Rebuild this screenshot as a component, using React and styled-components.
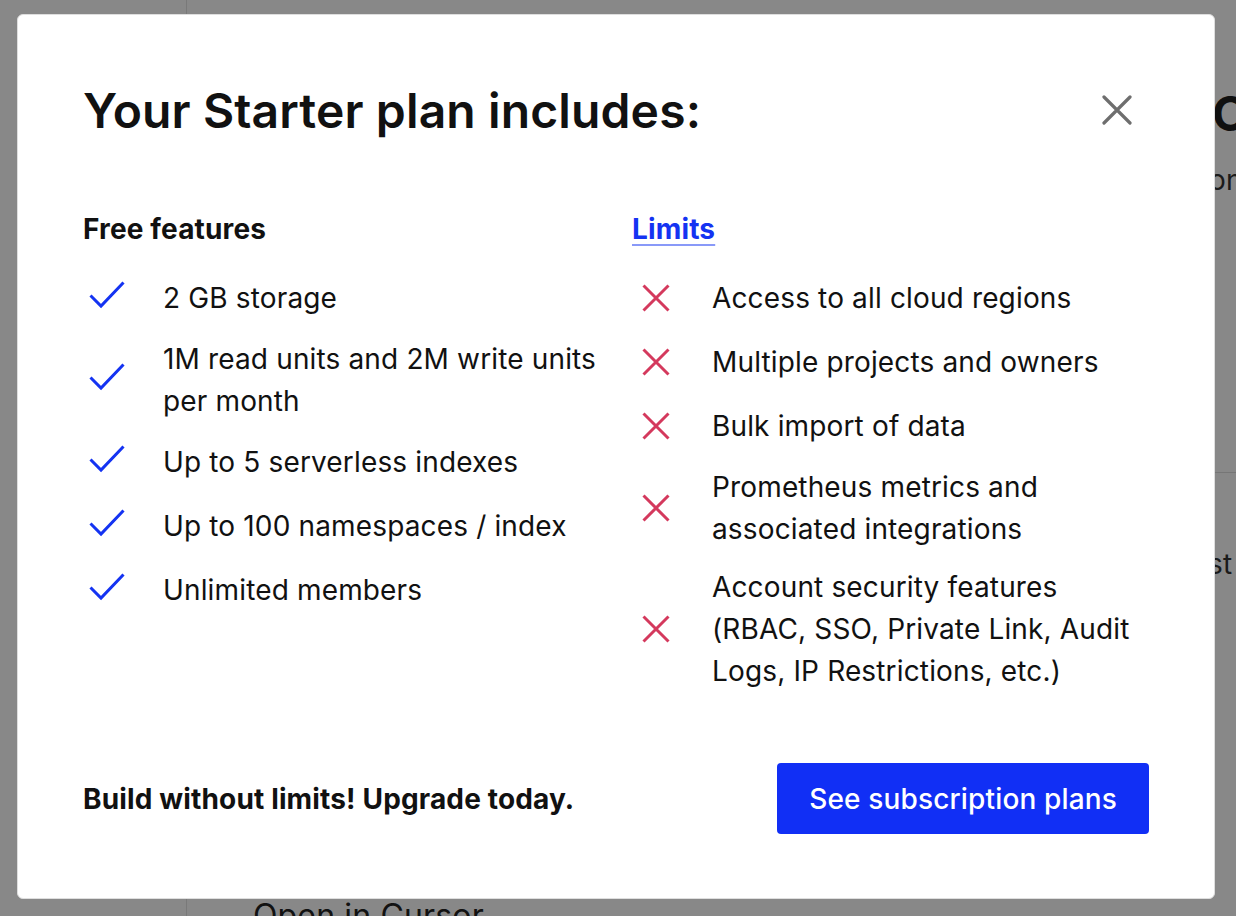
import React from "react";
import styled, { createGlobalStyle } from "styled-components";

const GlobalStyle = createGlobalStyle`
  html, body {
    margin: 0;
    padding: 0;
    background: #ffffff;
    font-family: Inter, "Noto Sans", "Liberation Sans", sans-serif;
    color: #111111;
    letter-spacing: 0.15px;
  }
  * {
    box-sizing: border-box;
  }
`;

const Page = styled.div`
  width: 100%;
  height: 100vh;
  display: flex;
  overflow: hidden;
`;

const Sidebar = styled.div`
  width: 187px;
  flex-shrink: 0;
  border-right: 1px solid #e3e3e3;
`;

const Main = styled.div`
  flex: 1;
  display: grid;
  grid-template-columns: 1025px 1fr;
`;

const MainLeft = styled.div`
  display: flex;
  flex-direction: column;
  justify-content: flex-end;
  padding: 0 0 0 66px;
`;

const OpenIn = styled.div`
  font-size: 32px;
  line-height: 40px;
  color: #222;
  transform: translateY(20px);
`;

const Aside = styled.div`
  display: flex;
  flex-direction: column;
  padding-top: 84px;
`;

const AsideTitle = styled.div`
  font-size: 48px;
  font-weight: 700;
  color: #1f1f1f;
  white-space: nowrap;
`;

const AsideText = styled.div`
  font-size: 28px;
  color: #333;
  margin-top: 20px;
  margin-left: -3px;
  white-space: nowrap;
`;

const AsideDivider = styled.div`
  height: 1px;
  background: #ddd;
  margin-top: 275px;
`;

const AsideText2 = styled.div`
  font-size: 28px;
  color: #333;
  margin-top: 74px;
  margin-left: -4px;
  white-space: nowrap;
`;

const Overlay = styled.div`
  position: fixed;
  inset: 0;
  background: rgba(0, 0, 0, 0.467);
  display: flex;
  align-items: flex-start;
  padding: 14px 21px 0 17px;
`;

const Modal = styled.div`
  flex: 1;
  height: 885px;
  background: #ffffff;
  border: 1px solid #dedede;
  border-radius: 6px;
  padding: 65px 65px 64px 65px;
  display: flex;
  flex-direction: column;
`;

const TitleRow = styled.div`
  height: 60px;
  display: flex;
  align-items: center;
  justify-content: space-between;
`;

const Title = styled.h2`
  margin: 0;
  font-size: 48px;
  font-weight: 600;
  letter-spacing: 0.13px;
  color: #111;
`;

const CloseButton = styled.button`
  width: 40px;
  height: 40px;
  border: none;
  background: transparent;
  padding: 0;
  margin-right: 12px;
  display: flex;
  align-items: center;
  justify-content: center;
  cursor: pointer;
`;

const Columns = styled.div`
  margin-top: 73px;
  display: grid;
  grid-template-columns: 1fr 1fr;
  column-gap: 32px;
`;

const Column = styled.div`
  display: flex;
  flex-direction: column;
`;

const ColumnHeader = styled.div`
  font-size: 28px;
  font-weight: 700;
  line-height: 32px;
  color: ${(p) => (p.link ? "#1433f2" : "#111")};
  text-decoration: ${(p) => (p.link ? "underline" : "none")};
  text-decoration-color: rgba(20, 51, 242, 0.5);
  text-decoration-thickness: 2px;
  text-underline-offset: 5px;
  align-self: flex-start;
  cursor: ${(p) => (p.link ? "pointer" : "default")};
`;

const List = styled.ul`
  list-style: none;
  margin: 29px 0 0 0;
  padding: 0;
  display: flex;
  flex-direction: column;
  gap: 16px;
`;

const Item = styled.li`
  min-height: 48px;
  display: flex;
  align-items: center;
  gap: 32px;
`;

const IconBox = styled.span`
  width: 48px;
  height: 48px;
  flex-shrink: 0;
  display: flex;
  align-items: center;
  justify-content: center;
  padding-bottom: ${(p) => (p.raised ? "6px" : "0")};
`;

const ItemText = styled.span`
  font-size: 28px;
  line-height: 42px;
  color: #111;
`;

const Footer = styled.div`
  margin-top: auto;
  display: flex;
  align-items: center;
  justify-content: space-between;
`;

const FooterText = styled.div`
  font-size: 28px;
  font-weight: 700;
  color: #111;
`;

const PrimaryButton = styled.button`
  height: 71px;
  padding: 0 32px;
  border: none;
  border-radius: 4px;
  background: #112ff5;
  color: #ffffff;
  font-family: Inter, "Noto Sans", "Liberation Sans", sans-serif;
  font-size: 28px;
  font-weight: 500;
  letter-spacing: 0.15px;
  cursor: pointer;
`;

const CheckIcon = () => (
  <svg width="36" height="28" viewBox="0 0 36 28" fill="none">
    <polyline
      points="1.5,14.5 12,25 34.5,1.5"
      stroke="#1433f2"
      strokeWidth="3"
      strokeLinecap="butt"
      strokeLinejoin="miter"
    />
  </svg>
);

const CrossIcon = () => (
  <svg width="28" height="28" viewBox="0 0 28 28" fill="none">
    <path d="M1.5 1.5 L26.5 26.5 M26.5 1.5 L1.5 26.5" stroke="#d4395d" strokeWidth="3" />
  </svg>
);

const CloseIcon = () => (
  <svg width="30" height="30" viewBox="0 0 30 30" fill="none">
    <path d="M2 2 L28 28 M28 2 L2 28" stroke="#6e6e6e" strokeWidth="3.2" strokeLinecap="round" />
  </svg>
);

const freeFeatures = [
  "2 GB storage",
  <>
    1M read units and 2M write units
    <br />
    per month
  </>,
  "Up to 5 serverless indexes",
  "Up to 100 namespaces / index",
  "Unlimited members",
];

const limits = [
  "Access to all cloud regions",
  "Multiple projects and owners",
  "Bulk import of data",
  <>
    Prometheus metrics and
    <br />
    associated integrations
  </>,
  <>
    Account security features
    <br />
    (RBAC, SSO, Private Link, Audit
    <br />
    Logs, IP Restrictions, etc.)
  </>,
];

export default function App() {
  return (
    <>
      <GlobalStyle />
      <Page>
        <Sidebar />
        <Main>
          <MainLeft>
            <OpenIn>Open in Cursor</OpenIn>
          </MainLeft>
          <Aside>
            <AsideTitle>Connect</AsideTitle>
            <AsideText>onboarding</AsideText>
            <AsideDivider />
            <AsideText2>st</AsideText2>
          </Aside>
        </Main>
      </Page>
      <Overlay>
        <Modal role="dialog">
          <TitleRow>
            <Title>Your Starter plan includes:</Title>
            <CloseButton aria-label="Close">
              <CloseIcon />
            </CloseButton>
          </TitleRow>
          <Columns>
            <Column>
              <ColumnHeader>Free features</ColumnHeader>
              <List>
                {freeFeatures.map((f, i) => (
                  <Item key={i}>
                    <IconBox raised>
                      <CheckIcon />
                    </IconBox>
                    <ItemText>{f}</ItemText>
                  </Item>
                ))}
              </List>
            </Column>
            <Column>
              <ColumnHeader link>Limits</ColumnHeader>
              <List>
                {limits.map((f, i) => (
                  <Item key={i}>
                    <IconBox>
                      <CrossIcon />
                    </IconBox>
                    <ItemText>{f}</ItemText>
                  </Item>
                ))}
              </List>
            </Column>
          </Columns>
          <Footer>
            <FooterText>Build without limits! Upgrade today.</FooterText>
            <PrimaryButton>See subscription plans</PrimaryButton>
          </Footer>
        </Modal>
      </Overlay>
    </>
  );
}
